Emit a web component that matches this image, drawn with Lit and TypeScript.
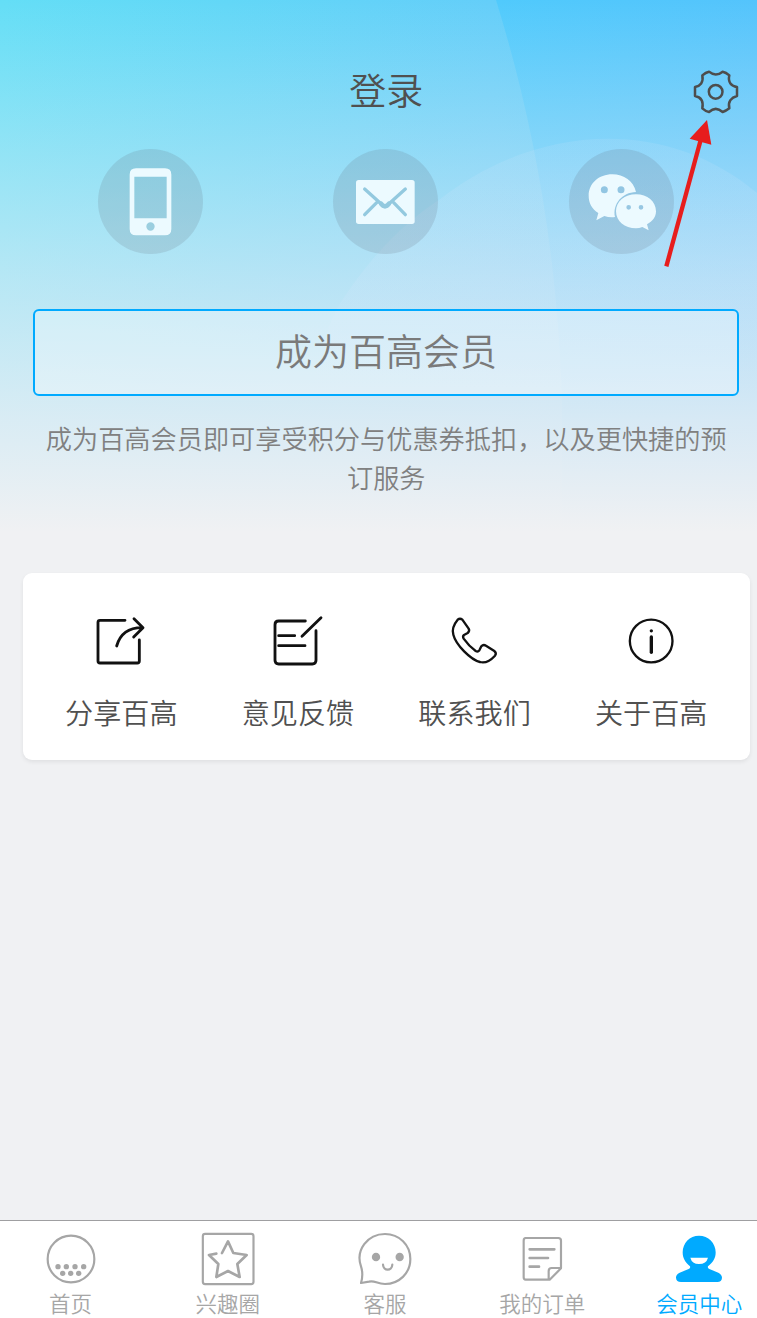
import { LitElement, html, css, svg } from "lit";
import { customElement } from "lit/decorators.js";

const phoneIcon = html`<svg class="badge-icon" viewBox="25 26 315 315">
  <path class="pale" fill-rule="evenodd" d="M139 84H226Q245 84 245 103V266Q245 285 226 285H139Q120 285 120 266V103Q120 84 139 84ZM134 109V234H231V109ZM182.500 246A12.500 12.500 0 1 0 182.500 271A12.500 12.500 0 1 0 182.500 246Z"/>
</svg>`;
const mailIcon = html`<svg class="badge-icon" viewBox="24 26 315 315">
  <rect class="pale" x="93" y="119" width="176" height="132" rx="8"/>
  <path class="fold" d="M119 146L168 190M241 146L192 190M155 187L119 223M206 187L241 223"/>
  <path class="fold thick" d="M168 190Q180 206 192 190"/>
</svg>`;
const wechatIcon = html`<svg class="badge-icon" viewBox="27 26 315 315">
  <path class="pale" fill-rule="evenodd" d="M228 155C221 122 191 102 157 102C116 102 86 130 86 166C86 188 96 206 115 218L109 240L133 227Q148 232 165 230C157 192 186 156 228 155ZM133 138A10.500 10.500 0 1 0 133 159A10.500 10.500 0 1 0 133 138ZM183 138A10.500 10.500 0 1 0 183 159A10.500 10.500 0 1 0 183 138Z"/>
  <path class="pale" fill-rule="evenodd" d="M228 162C194 162 168 184 168 213C168 242 194 264 228 264Q238 264 247 260L266 270L261 252C278 243 288 230 288 213C288 184 262 162 228 162ZM206 194A7 7 0 1 0 206 208A7 7 0 1 0 206 194ZM243 194A7 7 0 1 0 243 208A7 7 0 1 0 243 194Z"/>
</svg>`;

const actions = [
  {
    label: "分享百高",
    box: "255 165 156 156",
    art: svg`<path d="M345 181H270Q264 181 264 187V303Q264 309 270 309H382Q388 309 388 303V240"/><path d="M320 258Q336 202 398 203M372 176L399 203L371 231"/>`,
  },
  {
    label: "意见反馈",
    box: "786 165 156 156",
    art: svg`<path d="M886 183H806Q795 183 795 194V301Q795 312 806 312H907Q918 312 918 301V212M876 229L933 173M806 227H854M806 257H885"/>`,
  },
  {
    label: "联系我们",
    box: "207 165 156 156",
    art: svg`<path class="medium" d="M233 179Q240 173 247 179L266 206Q270 213 263 219L252 225Q247 229 251 236Q267 259 287 273Q294 277 298 271L304 259Q310 252 318 257L343 273Q351 279 345 287C333 300 318 311 300 306C272 299 228 255 220 224C215 208 224 190 233 179Z"/>`,
  },
  {
    label: "关于百高",
    box: "736 165 156 156",
    art: svg`<circle class="medium" cx="814.500" cy="243" r="64"/><path class="bar" d="M815 231V277"/><circle class="dot" cx="815" cy="212.500" r="5"/>`,
  },
];

const tabs = [
  {
    label: "首页",
    box: "131 66 162 162",
    art: svg`<circle cx="212" cy="147" r="70"/>${[
      [173, 170], [198, 170], [224, 170], [250, 170], [187, 190], [211, 190], [235, 190],
    ].map(([x, y]) => svg`<circle class="solid" cx=${x} cy=${y} r="8"/>`)}`,
  },
  {
    label: "兴趣圈",
    box: "602 66 162 162",
    art: svg`<rect x="607.500" y="71.500" width="152" height="151" rx="7"/><path class="wide" d="M665 129L683 94L699 129L739 135L711 162L718 201L683 183L648 201L654 162L626 135L648 131"/>`,
  },
  {
    label: "客服",
    box: "114 66 162 162",
    art: svg`<path d="M123 219C130 195 128 184 123 169C106 121 142 72 195 72C238 72 271 105 271 147C271 190 237 222 195 222Q183 222 169 217Q157 213 147 215Z"/><ellipse class="solid" cx="168" cy="141" rx="12.500" ry="13"/><ellipse class="solid" cx="239" cy="141" rx="12.500" ry="13"/><path d="M189 164C190 184 216 184 217 164"/>`,
  },
  {
    label: "我的订单",
    box: "585 66 162 162",
    art: svg`<path d="M617 84H715Q723 84 723 92V175L689 209H617Q611 209 611 202V92Q611 84 617 84ZM686 207V183Q686 174 695 174H722"/><path class="wide" d="M629 118H703M629 144H684M629 170H657"/>`,
  },
  {
    label: "会员中心",
    box: "247 66 162 162",
    active: true,
    art: svg`<path class="solid" fill-rule="evenodd" d="M328 77C300 77 279 99 279 127C279 145 287 158 301 169Q303 174 297 177L270 188C262 192 259 197 259 203Q260 216 274 216H383Q396 216 397 203C397 197 393 192 386 188L359 177Q353 174 355 169C370 158 378 145 378 127C378 99 356 77 328 77ZM302 143H355Q350 162 328 162Q307 162 302 143Z"/>`,
  },
];

@customElement("app-root")
export class AppRoot extends LitElement {
  static styles = css`
    :host {
      display: flex;
      flex-direction: column;
      position: relative;
      box-sizing: border-box;
      width: 100%;
      height: 1318px;
      overflow: hidden;
      background: #f0f1f3;
      font-family: "Noto Sans CJK SC", sans-serif;
      font-weight: 350;
      color: #505050;
    }
    svg { display: block; }
    .backdrop { position: absolute; left: 0; top: 0; width: 757px; height: 560px; }
    .content { position: relative; flex: 1; padding: 64px 7px 0 22.500px; }
    .bar-top {
      display: grid;
      grid-template-columns: 48px 1fr 48px;
      align-items: center;
      height: 56px;
      padding: 0 10.500px;
    }
    .title { grid-column: 2; margin: 0; padding-bottom: 5px; text-align: center; font-size: 37px; font-weight: inherit; line-height: 51px; }
    .gear { width: 48px; height: 48px; fill: none; stroke: #4d4d4d; stroke-width: 7.500; stroke-linejoin: round; }
    .logins { display: grid; grid-template-columns: repeat(3, 1fr); justify-items: center; padding: 29px 11px 0 10px; }
    .badge { width: 105px; height: 105px; border-radius: 50%; background: rgba(90, 90, 100, 0.15); overflow: hidden; }
    .badge-icon { width: 105px; height: 105px; }
    .pale { fill: #ecfaff; }
    .fold { fill: none; stroke: #93c9df; stroke-width: 10; stroke-linecap: round; stroke-linejoin: round; }
    .thick { stroke-width: 14; }
    .join {
      display: block;
      box-sizing: border-box;
      width: 706px;
      height: 87px;
      margin: 55px 0 0 10.500px;
      border: 2px solid #00aaff;
      border-radius: 6px;
      background: rgba(255, 255, 255, 0.3);
      color: #7a7a7a;
      font: inherit;
      font-size: 37px;
      line-height: 78px;
      padding: 0 0 5px;
    }
    .hint { margin: 23px 10px 0; padding: 0 11px; text-align: center; font-size: 26.200px; line-height: 39px; color: #808080; }
    .card {
      display: grid;
      grid-template-columns: repeat(4, 1fr);
      margin-top: 76px;
      height: 187px;
      box-sizing: border-box;
      padding: 42px 10.500px 0;
      border-radius: 9px;
      background: #fff;
      box-shadow: 0 2px 4px rgba(0, 0, 0, 0.07);
    }
    .action { display: flex; flex-direction: column; align-items: center; gap: 25px; font-size: 28.100px; line-height: 40px; }
    .action-icon { width: 52px; height: 52px; fill: none; stroke: #111; stroke-width: 8.500; stroke-linecap: round; stroke-linejoin: round; }
    .medium { stroke-width: 7; }
    .bar { stroke-width: 10; }
    .dot { fill: #111; stroke: none; }
    .tabs {
      position: relative;
      display: grid;
      grid-template-columns: repeat(5, 157.200px);
      box-sizing: border-box;
      height: 98px;
      padding-top: 11px;
      margin-left: -8px;
      width: 786px;
      border-top: 1px solid #9f9fa1;
      background: #fff;
    }
    .tab { display: flex; flex-direction: column; align-items: center; gap: 1px; font-size: 21.500px; line-height: 32px; color: #a6a6a6; }
    .tab.active { color: #00aaff; }
    .tab-icon { width: 54px; height: 54px; fill: none; stroke: currentColor; stroke-width: 6.500; stroke-linecap: round; stroke-linejoin: round; }
    .wide { stroke-width: 8; }
    .solid { fill: currentColor; stroke: none; }
    .pointer { position: absolute; left: 640px; top: 50px; width: 117px; height: 230px; }
  `;

  render() {
    return html`
      <svg class="backdrop" viewBox="0 0 757 560">
        <defs>
          <linearGradient id="sky" x1="0" x2="1" y1="0" y2="0">
            <stop offset="0" stop-color="#64def6"/>
            <stop offset="0.300" stop-color="#62d7f7"/>
            <stop offset="0.650" stop-color="#64cef9"/>
            <stop offset="1" stop-color="#5ccafb"/>
          </linearGradient>
          <linearGradient id="deep" x1="496" x2="757" y1="0" y2="0" gradientUnits="userSpaceOnUse">
            <stop offset="0" stop-color="#50cafc"/>
            <stop offset="1" stop-color="#54c4fc"/>
          </linearGradient>
          <linearGradient id="fade" x1="0" x2="0" y1="0" y2="1">
            <stop offset="0" stop-color="#f0f1f4" stop-opacity="0"/>
            <stop offset="0.250" stop-color="#eeeff4" stop-opacity="0.310"/>
            <stop offset="0.500" stop-color="#eaedf4" stop-opacity="0.620"/>
            <stop offset="0.750" stop-color="#e9eef4" stop-opacity="0.880"/>
            <stop offset="0.950" stop-color="#f0f1f3" stop-opacity="1"/>
            <stop offset="1" stop-color="#f0f1f3"/>
          </linearGradient>
          <linearGradient id="glow" x1="0" x2="0" y1="138" y2="400" gradientUnits="userSpaceOnUse">
            <stop offset="0" stop-color="#d4e6fa" stop-opacity="0.140"/>
            <stop offset="0.600" stop-color="#d4e6fa" stop-opacity="0.200"/>
            <stop offset="1" stop-color="#d4e6fa" stop-opacity="0"/>
          </linearGradient>
        </defs>
        <rect width="757" height="560" fill="url(#sky)"/>
        <path d="M496 0C530 110 557 240 562 400V560H757V0Z" fill="url(#deep)"/>
        <rect width="757" height="560" fill="url(#fade)"/>
        <path d="M310 400C320 350 330 320 338 307C370 255 410 218 439 200C530 128 660 112 757 193V400Z" fill="url(#glow)"/>
      </svg>
      <main class="content">
        <header class="bar-top">
          <h1 class="title">登录</h1>
          <svg class="gear" viewBox="156 54 144 144">
            <path d="M165 111L165 138C181 141 191 153 187 175Q197 184 207 186Q227 167 248 186Q258 183 268 175C263 155 274 142 291 138V111C274 108 263 97 268 76Q258 67 248 65Q227 82 207 65Q197 67 187 76C191 97 181 108 165 111Z"/>
            <circle cx="227" cy="125.500" r="20.500"/>
          </svg>
        </header>
        <section class="logins">
          <div class="badge">${phoneIcon}</div>
          <div class="badge">${mailIcon}</div>
          <div class="badge">${wechatIcon}</div>
        </section>
        <button class="join">成为百高会员</button>
        <p class="hint">成为百高会员即可享受积分与优惠券抵扣，以及更快捷的预订服务</p>
        <section class="card">
          ${actions.map((a) => html`<div class="action">
            <svg class="action-icon" viewBox=${a.box}>${a.art}</svg><span>${a.label}</span>
          </div>`)}
        </section>
      </main>
      <nav class="tabs">
        ${tabs.map((t) => html`<div class="tab ${t.active ? "active" : ""}">
          <svg class="tab-icon" viewBox=${t.box}>${t.art}</svg><span>${t.label}</span>
        </div>`)}
      </nav>
      <svg class="pointer" viewBox="0 0 351 690">
        <path d="M79 649L182 270" fill="none" stroke="#e71d1d" stroke-width="13"/>
        <path d="M201 210L149 266L214 284Z" fill="#e71d1d"/>
      </svg>
    `;
  }
}
